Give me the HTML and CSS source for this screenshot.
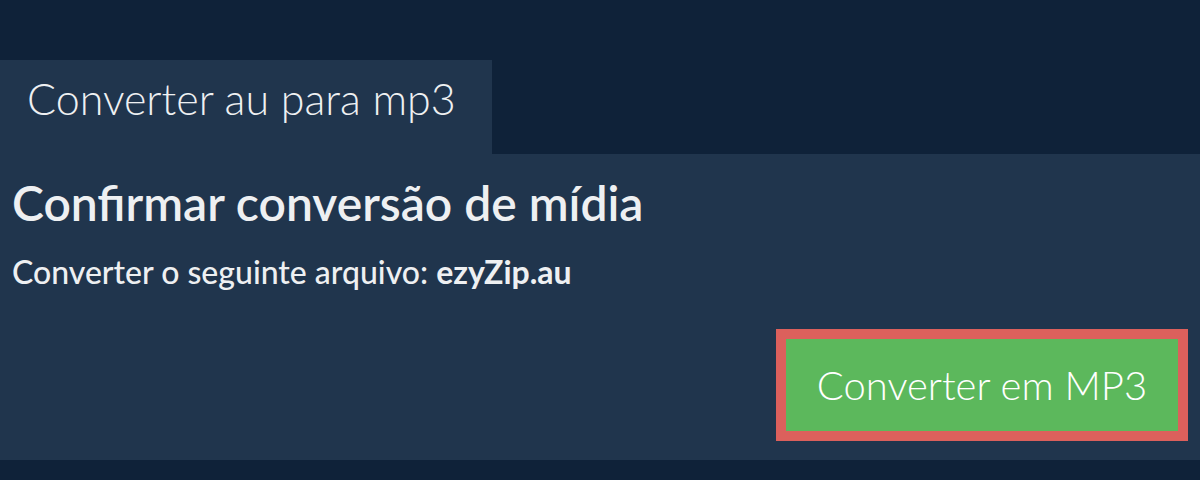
FILE: index.html
```html
<!DOCTYPE html>
<html lang="pt">
<head>
<meta charset="utf-8">
<link rel="stylesheet" href="styles.css">
</head>
<body>
<div class="page">
  <div class="tabs">
    <div class="tab">Converter au para mp3</div>
  </div>
  <div class="panel">
    <h1 class="title">Confirmar conversão de mídia</h1>
    <p class="file">Converter o seguinte arquivo: <strong>ezyZip.au</strong></p>
    <div class="actions">
      <button class="convert">Converter em MP3</button>
    </div>
  </div>
</div>
</body>
</html>
```
FILE: styles.css
```css
html, body {
  margin: 0;
  padding: 0;
  background: #0f2239;
  font-family: Lato, "Open Sans", sans-serif;
}
.page {
  width: 1200px;
  height: 480px;
  padding-top: 60px;
  box-sizing: border-box;
}
.tabs {
  display: flex;
}
.tab {
  background: #20354d;
  color: #eef0f2;
  font-weight: 300;
  font-size: 43px;
  width: 492px;
  height: 94px;
  box-sizing: border-box;
  padding: 15px 0 0 27px;
  line-height: 48px;
}
.panel {
  background: #20354d;
  height: 306px;
  box-sizing: border-box;
  padding: 21px 12px 0 12px;
  display: flex;
  flex-direction: column;
}
.title {
  margin: 0;
  color: #eef0f2;
  font-size: 48px;
  font-weight: 600;
  line-height: 56px;
}
.file {
  margin: 21px 0 0 0;
  color: #eef0f2;
  font-size: 32px;
  font-weight: 500;
  line-height: 40px;
}
.file strong {
  font-weight: 700;
}
.actions {
  display: flex;
  justify-content: flex-end;
  margin-top: 37px;
}
.convert {
  background: #5cb85c;
  border: 10px solid #dc605c;
  color: #ffffff;
  font-family: Lato, "Open Sans", sans-serif;
  font-weight: 300;
  font-size: 40px;
  width: 412px;
  height: 112px;
  padding: 0;
  cursor: pointer;
}
```
